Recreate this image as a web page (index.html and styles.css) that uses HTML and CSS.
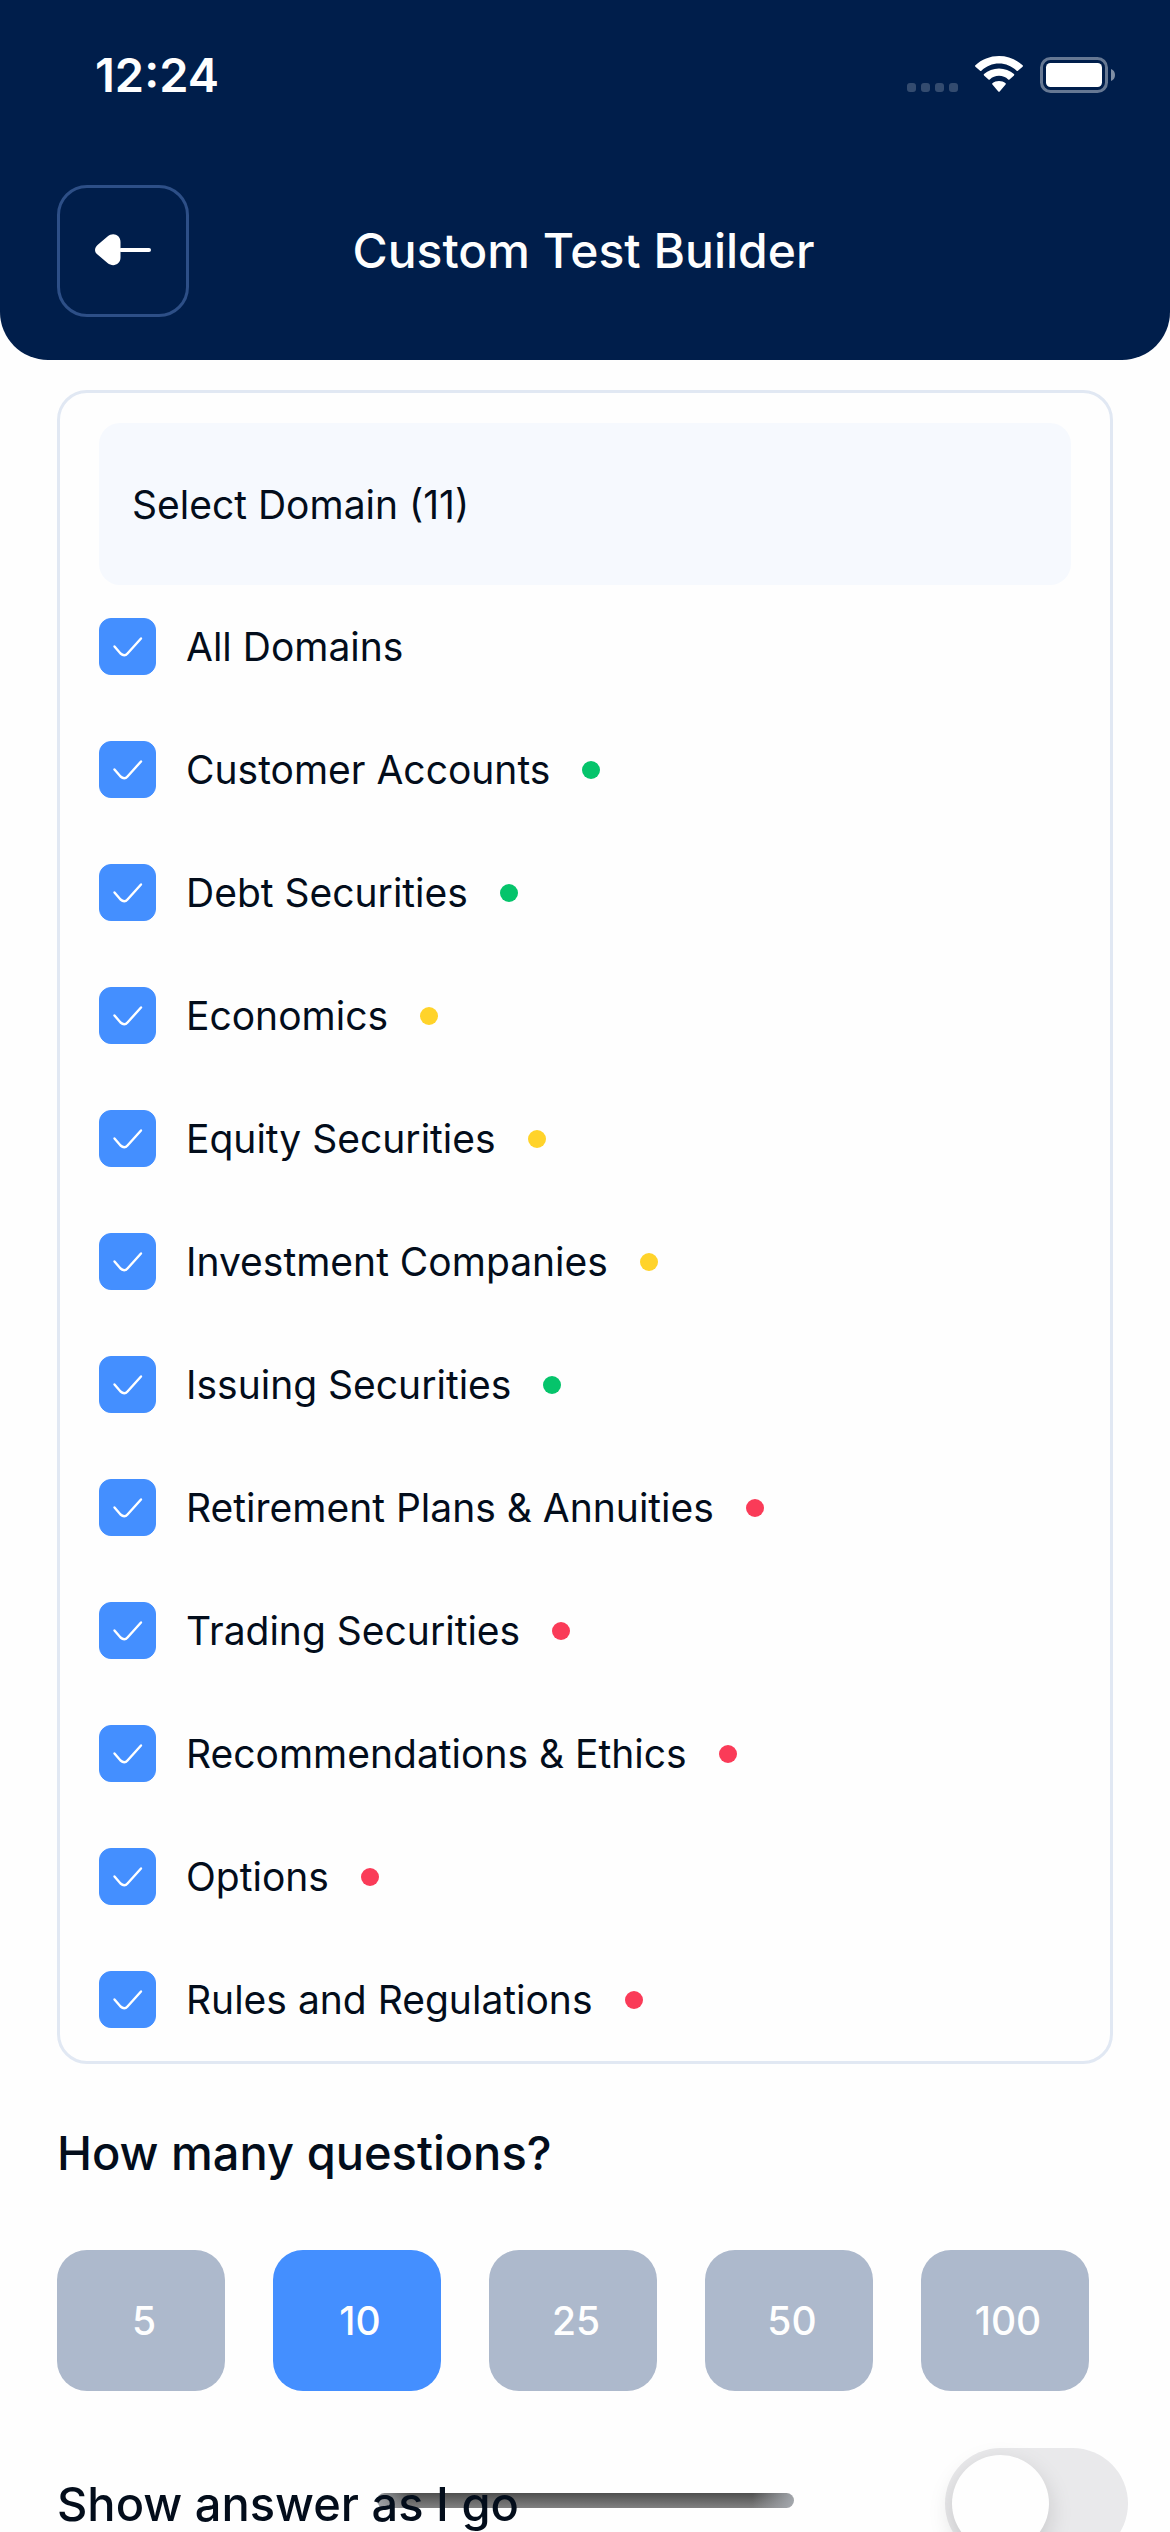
FILE: index.html
```html
<!DOCTYPE html>
<html lang="en">
<head>
  <meta charset="UTF-8" />
  <meta name="viewport" content="width=device-width, initial-scale=1.0" />
  <title>Custom Test Builder</title>
  <link rel="stylesheet" href="styles.css">
</head>
<body>
  <header class="top">
    <div class="status-bar">
      <div class="time">12:24</div>
      <div class="status-icons">
        <svg class="signal" width="51" height="10" viewBox="0 0 51 10" fill="#fff" fill-opacity="0.2">
          <rect x="0" width="9" height="9" rx="3" />
          <rect x="14" width="9" height="9" rx="3" />
          <rect x="28" width="9" height="9" rx="3" />
          <rect x="42" width="9" height="9" rx="3" />
        </svg>
        <svg class="wifi" width="48" height="37" viewBox="0 0 48 37" fill="#fff">
          <path d="M24 7.6c6.700 0 12.900 2.600 17.600 7.200.4.4.9.4 1.300 0l4.700-4.100c.5-.4.5-1 0-1.400C41.300 3.400 33 0 24 0S6.700 3.400.4 9.300c-.5.4-.5 1 0 1.400l4.700 4.100c.4.4.9.4 1.300 0C11.100 10.200 17.300 7.600 24 7.600z" />
          <path d="M24 19.800c3.500 0 6.800 1.300 9.200 3.600.4.4.9.4 1.300 0l4.500-4c.4-.4.4-1 0-1.300C35 14.700 29.700 12.600 24 12.600S13 14.700 9 18.100c-.4.3-.4.9 0 1.300l4.500 4c.4.4.9.4 1.300 0 2.400-2.300 5.700-3.600 9.200-3.600z" />
          <path d="M30.600 28.500c.4-.4.4-1 0-1.300-1.800-1.400-4.100-2.200-6.600-2.200s-4.800.8-6.600 2.200c-.4.300-.4.900 0 1.300l5.900 6.900c.4.5 1 .5 1.400 0z" />
        </svg>
        <svg class="battery" width="75" height="36" viewBox="0 0 75 36">
          <rect x="1.500" y="1.500" width="65" height="33" rx="9" fill="none" stroke="#fff" stroke-opacity="0.400" stroke-width="3" />
          <rect x="6" y="6" width="56" height="24" rx="4.500" fill="#fff" />
          <path d="M71 12c2.600 1 4 3.300 4 6s-1.400 5-4 6z" fill="#fff" fill-opacity="0.500" />
        </svg>
      </div>
    </div>

    <div class="nav">
      <button class="back" type="button" aria-label="Back">
        <svg width="56" height="34" viewBox="0 0 56 34" fill="#fff">
          <path d="M2.500 11 12.500 2.500C18 -2 25.500 1 25.500 8v15.500c0 7-7.500 10-13 5.500L2.500 20.500C-.8 18-.8 14 2.500 11z" />
          <rect x="24" y="14" width="32" height="4" rx="2" />
        </svg>
      </button>
      <h1>Custom Test Builder</h1>
    </div>
  </header>

  <main class="content">
    <section class="card">
      <div class="select-domain">Select Domain (11)</div>
      <ul class="domains">
        <li><label><input type="checkbox" checked>All Domains</label></li>
        <li><label><input type="checkbox" checked>Customer Accounts</label><span class="dot green"></span></li>
        <li><label><input type="checkbox" checked>Debt Securities</label><span class="dot green"></span></li>
        <li><label><input type="checkbox" checked>Economics</label><span class="dot yellow"></span></li>
        <li><label><input type="checkbox" checked>Equity Securities</label><span class="dot yellow"></span></li>
        <li><label><input type="checkbox" checked>Investment Companies</label><span class="dot yellow"></span></li>
        <li><label><input type="checkbox" checked>Issuing Securities</label><span class="dot green"></span></li>
        <li><label><input type="checkbox" checked>Retirement Plans &amp; Annuities</label><span class="dot red"></span></li>
        <li><label><input type="checkbox" checked>Trading Securities</label><span class="dot red"></span></li>
        <li><label><input type="checkbox" checked>Recommendations &amp; Ethics</label><span class="dot red"></span></li>
        <li><label><input type="checkbox" checked>Options</label><span class="dot red"></span></li>
        <li><label><input type="checkbox" checked>Rules and Regulations</label><span class="dot red"></span></li>
      </ul>
    </section>

    <h2>How many questions?</h2>
    <div class="amounts">
      <button type="button">5</button>
      <button type="button" class="active">10</button>
      <button type="button">25</button>
      <button type="button">50</button>
      <button type="button">100</button>
    </div>

    <div class="switch-row">
      <label for="show-answer">Show answer as I go</label>
      <input type="checkbox" id="show-answer" class="switch" role="switch">
    </div>
  </main>

  <div class="home-indicator"></div>
</body>
</html>
```
FILE: styles.css
```css
* {
  box-sizing: border-box;
}

body {
  display: flex;
  flex-direction: column;
  height: 100vh;
  margin: 0;
  overflow: hidden;
  background-color: #fefefe;
  color: #030d1b;
  font-family: Inter, sans-serif;
  font-size: 39px;
}

h1, h2 {
  margin: 0;
  font-weight: 500;
  line-height: 66px;
}

button {
  font-family: inherit;
  cursor: pointer;
}

/* Header */
.top {
  flex-shrink: 0;
  padding-bottom: 43px;
  background-color: #001e4b;
  color: #fefefe;
  border-radius: 0 0 48px 48px;
}

.status-bar {
  display: flex;
  justify-content: space-between;
  align-items: center;
  height: 148px;
  padding: 0 55px 0 95px;
}

.time {
  font-size: 47px;
  font-weight: 600;
}

.status-icons {
  display: flex;
  align-items: flex-end;
}

.wifi {
  margin: 0 17px;
}

.nav {
  display: grid;
  grid-template-columns: 132px 1fr 132px;
  align-items: center;
  margin-top: 37px;
  padding: 0 60px 0 57px;
}

.nav h1 {
  font-size: 48px;
  text-align: center;
}

.back {
  display: flex;
  justify-content: center;
  align-items: center;
  height: 132px;
  padding: 0;
  background: none;
  border: 3px solid #2d4f87;
  border-radius: 30px;
}

/* Domain list */
.content {
  flex: 1;
  padding: 30px 57px;
  overflow-y: auto;
  scrollbar-width: none;
}

.card {
  padding: 30px 39px 33px;
  border: 3px solid #e1e8f3;
  border-radius: 30px;
}

.select-domain {
  display: flex;
  align-items: center;
  height: 162px;
  padding: 0 33px;
  background-color: #f6f9fe;
  border-radius: 21px;
}

.domains {
  display: flex;
  flex-direction: column;
  gap: 66px;
  margin: 33px 0 0;
  padding: 0;
  list-style: none;
}

.domains li {
  display: flex;
  align-items: center;
  gap: 32px;
  line-height: 57px;
}

.domains label {
  display: flex;
  align-items: center;
  gap: 30px;
}

.domains input {
  appearance: none;
  width: 57px;
  height: 57px;
  margin: 0;
  border: 1px solid #448fff;
  border-radius: 12px;
}

.domains input:checked {
  background: #448fff url("data:image/svg+xml,%3Csvg xmlns='http://www.w3.org/2000/svg' viewBox='0 0 57 57' fill='none' stroke='white' stroke-width='2.4' stroke-linecap='round'%3E%3Cpath d='M15.500 28.500 21.500 35.500Q25.500 39 28.500 35.500L42 20.500'/%3E%3C/svg%3E") center / 57px 57px no-repeat;
}

.dot {
  width: 18px;
  height: 18px;
  border-radius: 50%;
}

.green { background-color: #05c46b; }
.yellow { background-color: #ffd32a; }
.red { background-color: #fa3b58; }

/* Question count */
.content h2 {
  margin-top: 56px;
  font-size: 47px;
}

.amounts {
  display: flex;
  gap: 48px;
  margin-top: 64px;
}

.amounts button {
  width: 168px;
  height: 141px;
  padding: 0 0 0 6px;
  background-color: #adb9cc;
  border: 0;
  border-radius: 30px;
  color: #fefefe;
  font-size: 39px;
  font-weight: 500;
}

.amounts .active {
  background-color: #448fff;
}

.switch-row {
  display: flex;
  justify-content: space-between;
  align-items: center;
  margin: 57px -15px 0 0;
  font-size: 47px;
  font-weight: 500;
}

/* keeps the label readable over the home indicator */
.switch-row label {
  position: relative;
  z-index: 2;
}

.switch {
  appearance: none;
  display: flex;
  width: 183px;
  height: 111px;
  margin: 0;
  padding: 7px;
  background-color: #e9e9eb;
  border-radius: 56px;
}

.switch::before {
  content: '';
  width: 97px;
  height: 97px;
  background-color: #fefefe;
  border-radius: 50%;
  box-shadow: 0 9px 24px rgba(0, 0, 0, 0.15);
}

.switch:checked {
  justify-content: flex-end;
  background-color: #448fff;
}

/* Bar over the bottom of the screen */
.home-indicator {
  position: fixed;
  bottom: 24px;
  left: 50%;
  z-index: 1;
  width: 417px;
  height: 15px;
  margin-left: -208px;
  border-radius: 8px;
  background:
    linear-gradient(to right, rgba(170, 174, 180, 0.8), transparent 8%, transparent 90%, rgba(170, 174, 180, 0.9)),
    linear-gradient(#4f4f4f, #808080);
}
```
